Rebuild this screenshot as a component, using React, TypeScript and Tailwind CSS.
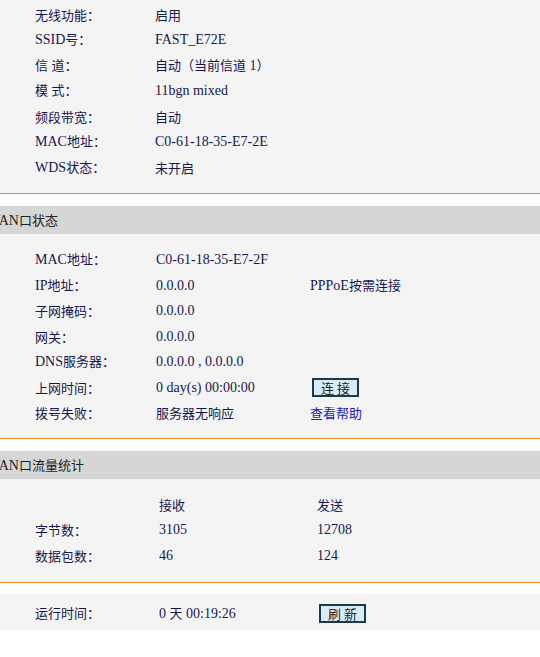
import React from "react";

/* 把字符串拆成 ASCII 段和中文段，ASCII 段用衬线体稍大一号 */
function T({ s }: { s: string }) {
  const parts = s.split(/([\x20-\x7e]+)/).filter((p) => p !== "");
  return (
    <>
      {parts.map((p, i) =>
        /^[\x20-\x7e]+$/.test(p) ? (
          <span key={i} className="font-['Liberation_Serif',serif] text-[14px]" style={{ whiteSpace: "pre" }}>{p}</span>
        ) : (
          <span key={i}>{p}</span>
        )
      )}
    </>
  );
}

const wireless: [string, string][] = [
  ["无线功能：", "启用"],
  ["SSID号：", "FAST_E72E"],
  ["信 道：", "自动（当前信道 1）"],
  ["模 式：", "11bgn mixed"],
  ["频段带宽：", "自动"],
  ["MAC地址：", "C0-61-18-35-E7-2E"],
  ["WDS状态：", "未开启"],
];

function Btn({ label }: { label: string }) {
  return (
    <button className="h-[19px] w-[47px] border-2 border-[#1b3a48] bg-[#d8ecf8] text-[13px] leading-none text-[#222]">
      {label}
    </button>
  );
}

function Divider() {
  return (
    <>
      <div className="h-px bg-[#e08a2a]" />
      <div className="h-[12px] bg-white" />
    </>
  );
}

function Header({ title }: { title: string }) {
  return (
    <div className="flex h-[28px] items-center bg-[#d6d6d6] text-[#222]">
      <span className="-ml-[13px]"><T s={title} /></span>
    </div>
  );
}

export default function App() {
  return (
    <div className="h-[657px] w-[540px] overflow-hidden bg-white font-['Noto_Sans_CJK_SC',sans-serif] text-[13px] text-[#17174e]">
      {/* 无线状态 */}
      <div className="bg-[#f4f4f4] pl-[35px] pt-[1.5px] pb-[13px]">
        {wireless.map(([k, v]) => (
          <div key={k} className="flex h-[25.5px] items-center">
            <div className="w-[120px]"><T s={k} /></div>
            <div><T s={v} /></div>
          </div>
        ))}
      </div>
      <Divider />

      {/* WAN口状态 */}
      <Header title="WAN口状态" />
      <div className="bg-[#f4f4f4] pl-[35px] pt-[13px] pb-[12.5px]">
        {[
          ["MAC地址：", "C0-61-18-35-E7-2F", null],
          ["IP地址：", "0.0.0.0", <T s="PPPoE按需连接" />],
          ["子网掩码：", "0.0.0.0", null],
          ["网关：", "0.0.0.0", null],
          ["DNS服务器：", "0.0.0.0 , 0.0.0.0", null],
          ["上网时间：", "0 day(s) 00:00:00", <Btn label="连 接" />],
          ["拨号失败：", "服务器无响应", <span className="text-[#2020c4]">查看帮助</span>],
        ].map(([k, v, extra], i) => (
          <div key={i} className="flex h-[25.5px] items-center">
            <div className="w-[121px]"><T s={k as string} /></div>
            <div className="w-[154px]"><T s={v as string} /></div>
            <div className={i === 5 ? "pl-[2px]" : ""}>{extra as React.ReactNode}</div>
          </div>
        ))}
      </div>
      <Divider />

      {/* WAN口流量统计 */}
      <Header title="WAN口流量统计" />
      <div className="bg-[#f4f4f4] pl-[35px] pt-[12.5px] pb-[14px]">
        {[
          ["", "接收", "发送"],
          ["字节数：", "3105", "12708"],
          ["数据包数：", "46", "124"],
        ].map(([a, b, c], i) => (
          <div key={i} className="flex h-[25.5px] items-center">
            <div className="w-[124px]"><T s={a} /></div>
            <div className="w-[158px]"><T s={b} /></div>
            <div><T s={c} /></div>
          </div>
        ))}
      </div>
      <div className="h-px bg-[#e08a2a]" />
      <div className="h-[11px] bg-white" />
      <div className="flex h-[36px] items-center bg-[#f4f4f4] pl-[35px] pt-[2px]">
        <div className="w-[124px]"><T s="运行时间：" /></div>
        <div className="w-[160px]"><T s="0 天 00:19:26" /></div>
        <Btn label="刷 新" />
      </div>
    </div>
  );
}
